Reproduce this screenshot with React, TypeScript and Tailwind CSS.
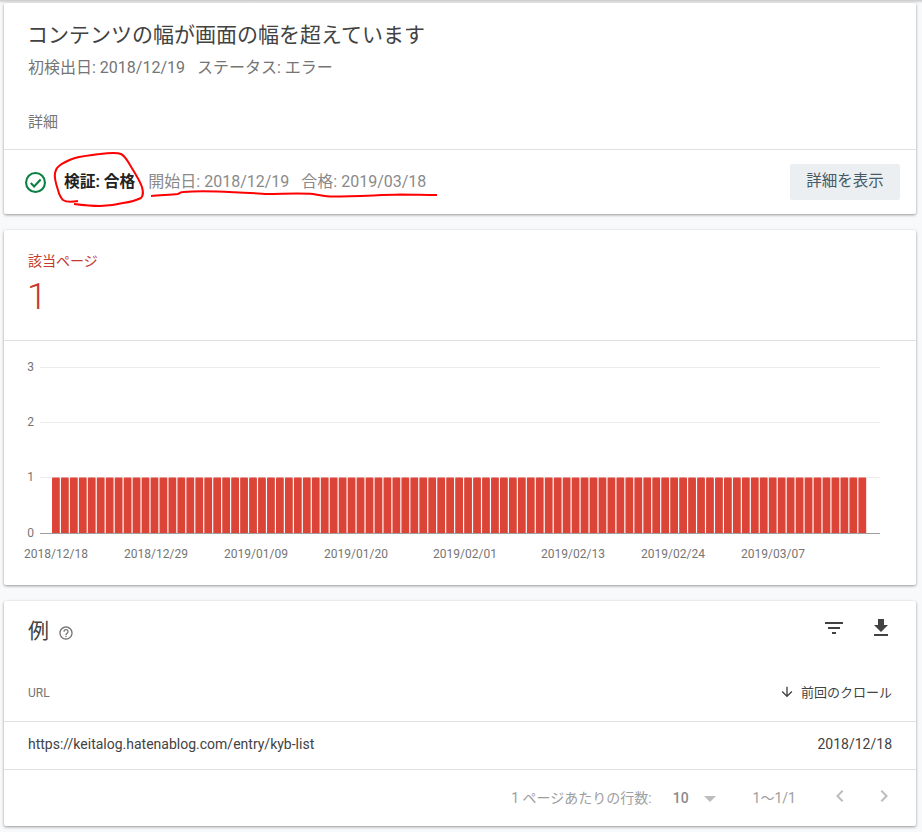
import React from "react";

const font = { fontFamily: '"Roboto","Noto Sans CJK JP",sans-serif' };
const cardCls = "ml-1 w-[912px] bg-white rounded-[2px] shadow-[0_1px_3px_rgba(0,0,0,0.4)]";
const dates: [string, number][] = [
  ["2018/12/18", 56], ["2018/12/29", 156], ["2019/01/09", 256], ["2019/01/20", 356],
  ["2019/02/01", 465], ["2019/02/13", 573], ["2019/02/24", 673], ["2019/03/07", 773],
];
const bars = Array.from({ length: 91 }, (_, i) => i);

function Chart() {
  return (
    <svg width="912" height="244" viewBox="4 341 912 244" className="block" style={font}>
      {[["3", 367], ["2", 422], ["1", 477]].map(([t, y]) => (
        <g key={t}>
          <line x1="40" x2="880" y1={Number(y) + 0.5} y2={Number(y) + 0.5} stroke="#ececec" />
          <text x="34" y={Number(y) + 4} textAnchor="end" fontSize="12" fill="#757575">{t}</text>
        </g>
      ))}
      {bars.map((i) => (
        <path
          key={i}
          d={`M${52 + i * 8.96} 533V478.5q0-1 1-1h5.8q1 0 1 1V533z`}
          fill="#db4437"
        />
      ))}
      <line x1="40" x2="880" y1="533.5" y2="533.5" stroke="#9e9e9e" />
      <text x="34" y="537" textAnchor="end" fontSize="12" fill="#757575">0</text>
      {dates.map(([d, x]) => (
        <text key={d} x={x} y="558" textAnchor="middle" fontSize="12" fill="#757575">{d}</text>
      ))}
    </svg>
  );
}

export default function App() {
  return (
    <div className="w-[922px] h-[832px] overflow-hidden bg-[#f8f9fa]" style={font}>
      <div className="h-[3px] bg-gradient-to-b from-[#c8c8c8] to-[#f4f4f4]" />
      <div className={`${cardCls} h-[211px] flex flex-col`}>
        <div className="h-[146px] px-6 pt-[18px]">
          <div className="text-[21px] leading-[28px] text-[#424242] ml-[-1px]">コンテンツの幅が画面の幅を超えています</div>
          <div className="mt-[8px] text-[16px] leading-[22px] text-[#757575] flex gap-3">
            <span>初検出日: 2018/12/19</span>
            <span>ステータス: エラー</span>
          </div>
          <div className="mt-[33px] text-[15px] leading-[20px] text-[#757575]">詳細</div>
        </div>
        <div className="relative flex-1 border-t border-[#e0e0e0] flex items-center pl-[21px] pr-4">
          <svg width="21" height="21" viewBox="0 0 20 20" className="mr-[18px]">
            <circle cx="10" cy="10" r="9" fill="none" stroke="#0b8043" strokeWidth="2" />
            <path d="M5.5 10.5l3.2 3.2 6.2-6.6" fill="none" stroke="#0b8043" strokeWidth="2" />
          </svg>
          <span className="text-[15.75px] font-bold text-[#212121] mr-[13px]">検証: 合格</span>
          <span className="text-[16px] text-[#8a8a8a] flex gap-3">
            <span>開始日: 2018/12/19</span>
            <span>合格: 2019/03/18</span>
          </span>
          <button className="ml-auto w-[110px] h-9 rounded-[2px] bg-[#eceff1] text-[15.5px] text-[#455a64]">詳細を表示</button>
          <svg width="450" height="64" viewBox="0 150 450 64" className="absolute left-[-4px] top-0 pointer-events-none">
            <path
              d="M78 201C72 202 66 202 63 200C60 197 59 194 58 190C56 184 54 178 55 173C56 170 56 168 59 166C64 162 69 160 75 158C83 156 92 155 100 154C108 153 116 152 121 154C125 156 127 160 130 165C134 172 139 179 142 187C143 191 144 195 141 198C137 200 130 202 123 203C115 205 107 206 100 206C91 206 82 205 74 204"
              fill="none" stroke="#f00" strokeWidth="2"
            />
            <path
              d="M151 196C160 195 170 195 178 194C180 193 181 192 183 192C194 191 206 191 217 191.500C234 192 250 193 267 194C282 194 298 193 313 194C320 195 326 196.500 333 196.500C355 196.500 378 195 400 194.500C412 194.500 425 195 437 195"
              fill="none" stroke="#f00" strokeWidth="2"
            />
          </svg>
        </div>
      </div>

      <div className={`${cardCls} mt-4 h-[355px]`}>
        <div className="h-[111px] px-6 pt-[21px] border-b border-[#e0e0e0]">
          <div className="text-[14px] leading-[20px] text-[#c5392b]">該当ページ</div>
          <div className="text-[36px] leading-[44px] font-light text-[#c5392b] mt-[4px] ml-[-1px]">1</div>
        </div>
        <Chart />
      </div>

      <div className={`${cardCls} mt-4 h-[225px] flex flex-col`}>
        <div className="h-[68px] px-6 flex items-start justify-between">
          <div className="flex items-center gap-[9px] pt-[16px]">
            <span className="text-[21px] leading-[28px] text-[#424242]">例</span>
            <svg width="16" height="16" viewBox="0 0 24 24" fill="#757575" className="mt-[3px]">
              <path d="M11 18h2v-2h-2v2zm1-16C6.48 2 2 6.48 2 12s4.48 10 10 10 10-4.48 10-10S17.52 2 12 2zm0 18c-4.41 0-8-3.59-8-8s3.59-8 8-8 8 3.59 8 8-3.59 8-8 8zm0-14c-2.21 0-4 1.79-4 4h2c0-1.1.9-2 2-2s2 .9 2 2c0 2-3 1.75-3 5h2c0-2.25 3-2.5 3-5 0-2.21-1.79-4-4-4z" />
            </svg>
          </div>
          <div className="flex items-center gap-[23px] pt-[15px] mr-[-1px]">
            <svg width="24" height="24" viewBox="0 0 24 24" fill="#424242">
              <path d="M10 18h4v-2h-4v2zM3 6v2h18V6H3zm3 7h12v-2H6v2z" />
            </svg>
            <svg width="24" height="24" viewBox="0 0 24 24" fill="#424242">
              <path d="M19 9h-4V3H9v6H5l7 7 7-7zM5 18v2h14v-2H5z" />
            </svg>
          </div>
        </div>
        <div className="h-[53px] px-6 flex items-center justify-between border-b border-[#e0e0e0] pb-[5px]">
          <span className="text-[12px] text-[#757575]">URL</span>
          <span className="flex items-center gap-[6px] text-[13px] text-[#424242]">
            <svg width="16" height="16" viewBox="0 0 24 24" fill="#424242" className="mt-[-2px]">
              <path d="M20 12l-1.41-1.41L13 16.17V4h-2v12.17l-5.58-5.59L4 12l8 8 8-8z" />
            </svg>
            前回のクロール
          </span>
        </div>
        <div className="h-[48px] px-6 flex items-center justify-between border-b border-[#e0e0e0] text-[14px] text-[#424242] pb-[2px]">
          <span>https://keitalog.hatenablog.com/entry/kyb-list</span>
          <span>2018/12/18</span>
        </div>
        <div className="flex-1 flex items-center justify-end text-[14px] text-[#9e9e9e] pr-[20px]">
          <span>1 ページあたりの行数:</span>
          <span className="ml-[21px] font-medium text-[#8a8a8a]">10</span>
          <span className="ml-[15px] w-0 h-0 border-x-[6px] border-x-transparent border-t-[6px] border-t-[#bdbdbd] mt-[2px]" />
          <span className="ml-[37px]">1〜1/1</span>
          <svg width="24" height="24" viewBox="0 0 24 24" fill="#bdbdbd" className="ml-[32px] mt-[-4px]">
            <path d="M15.41 7.41L14 6l-6 6 6 6 1.41-1.41L10.83 12z" />
          </svg>
          <svg width="24" height="24" viewBox="0 0 24 24" fill="#bdbdbd" className="ml-[20px] mt-[-4px]">
            <path d="M8.59 16.59L10 18l6-6-6-6-1.41 1.41L13.17 12z" />
          </svg>
        </div>
      </div>
    </div>
  );
}
